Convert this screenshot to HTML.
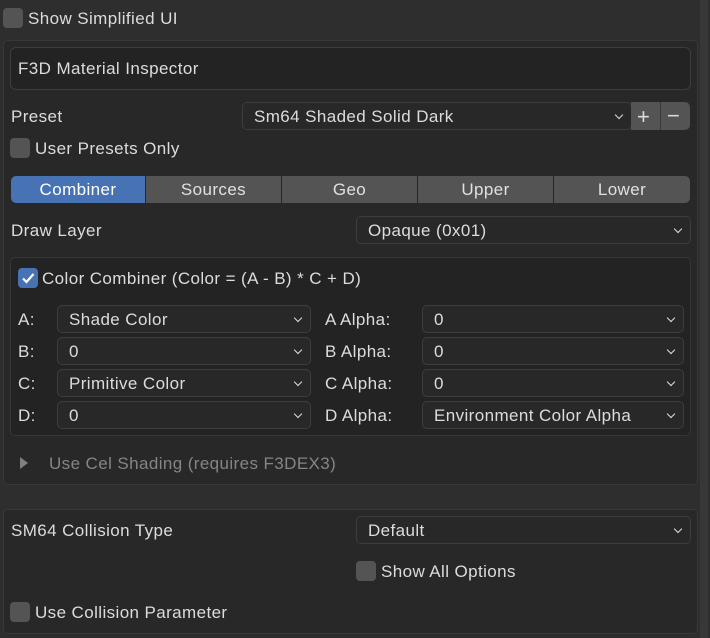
<!DOCTYPE html><html><head><style>
*{box-sizing:border-box}
body{margin:0;width:710px;height:638px;background:#2e2e2e;font-family:"Liberation Sans","DejaVu Sans",sans-serif;font-size:17px;letter-spacing:0.4px;color:#dcdcdc;position:relative;overflow:hidden}
.a{position:absolute}
.cb{position:absolute;width:20px;height:20px;background:#545454;border-radius:4px}
.t{position:absolute;line-height:20px;white-space:nowrap;margin-top:1px}
.dd{position:absolute;background:#282828;border:1px solid #3d3d3d;border-radius:5px;height:28px;line-height:28px;padding-left:11px;white-space:nowrap}
.dd:after{content:"";position:absolute;right:9px;top:9px;width:5px;height:5px;border-right:1.6px solid #ddd;border-bottom:1.6px solid #ddd;transform:rotate(45deg)}
.tab{position:absolute;top:176px;height:27px;background:#545454;text-align:center;line-height:28px;color:#e0e0e0}
</style></head><body>
<div class="a" style="left:700px;top:0;width:8px;height:638px;background:#383838"></div>
<div class="cb" style="left:3px;top:8px"></div><div class="t" style="left:28px;top:8px">Show Simplified UI</div>
<div class="a" style="left:3px;top:40px;width:695px;height:445px;background:#282828;border:1px solid #383838;border-radius:5px"></div>
<div class="a" style="left:10px;top:47px;width:681px;height:43px;background:#232323;border:1px solid #3d3d3d;border-radius:6px"></div>
<div class="t" style="left:18px;top:58px">F3D Material Inspector</div>
<div class="t" style="left:11px;top:106px">Preset</div>
<div class="dd" style="left:242px;top:102px;width:390px">Sm64 Shaded Solid Dark</div>
<div class="a" style="left:631px;top:102px;width:59px;height:28px;background:#545454;border-radius:0 5px 5px 0"></div>
<div class="a" style="left:660px;top:102px;width:1px;height:28px;background:#3a3a3a"></div>
<div class="t" style="left:637px;top:103px;font-size:22px;line-height:26px">+</div>
<div class="t" style="left:667px;top:103px;font-size:22px;line-height:24px">−</div>
<div class="cb" style="left:10px;top:138px"></div><div class="t" style="left:35px;top:138px">User Presets Only</div>
<div class="tab" style="left:11px;width:134px;background:#4772b3;border-radius:5px 0 0 5px;color:#fff">Combiner</div>
<div class="tab" style="left:146px;width:135px">Sources</div>
<div class="tab" style="left:282px;width:135px">Geo</div>
<div class="tab" style="left:418px;width:135px">Upper</div>
<div class="tab" style="left:554px;width:136px;border-radius:0 5px 5px 0">Lower</div>
<div class="t" style="left:11px;top:220px">Draw Layer</div>
<div class="dd" style="left:356px;top:216px;width:335px">Opaque (0x01)</div>
<div class="a" style="left:10px;top:257px;width:681px;height:179px;background:#232323;border:1px solid #363636;border-radius:5px"></div>
<div class="cb" style="left:18px;top:268px;background:#4772b3"></div>
<svg class="a" style="left:18px;top:268px" width="20" height="20"><path d="M5 10.5l3.5 3.5 7-8" stroke="#fff" stroke-width="2.2" fill="none"/></svg>
<div class="t" style="left:42px;top:268px">Color Combiner (Color = (A - B) * C + D)</div>
<div class="t" style="left:18px;top:309px">A:</div><div class="dd" style="left:57px;top:305px;width:254px">Shade Color</div>
<div class="t" style="left:18px;top:341px">B:</div><div class="dd" style="left:57px;top:337px;width:254px">0</div>
<div class="t" style="left:18px;top:373px">C:</div><div class="dd" style="left:57px;top:369px;width:254px">Primitive Color</div>
<div class="t" style="left:18px;top:405px">D:</div><div class="dd" style="left:57px;top:401px;width:254px">0</div>
<div class="t" style="left:325px;top:309px">A Alpha:</div><div class="dd" style="left:422px;top:305px;width:262px">0</div>
<div class="t" style="left:325px;top:341px">B Alpha:</div><div class="dd" style="left:422px;top:337px;width:262px">0</div>
<div class="t" style="left:325px;top:373px">C Alpha:</div><div class="dd" style="left:422px;top:369px;width:262px">0</div>
<div class="t" style="left:325px;top:405px">D Alpha:</div><div class="dd" style="left:422px;top:401px;width:262px">Environment Color Alpha</div>
<svg class="a" style="left:18px;top:456px" width="12" height="14"><path d="M2 1l8 6-8 6z" fill="#808080"/></svg>
<div class="t" style="left:49px;top:453px;color:#858585">Use Cel Shading (requires F3DEX3)</div>
<div class="a" style="left:3px;top:509px;width:695px;height:125px;background:#282828;border:1px solid #383838;border-radius:5px"></div>
<div class="t" style="left:11px;top:520px">SM64 Collision Type</div>
<div class="dd" style="left:356px;top:516px;width:335px">Default</div>
<div class="cb" style="left:356px;top:561px"></div><div class="t" style="left:381px;top:561px">Show All Options</div>
<div class="cb" style="left:10px;top:602px"></div><div class="t" style="left:35px;top:602px">Use Collision Parameter</div>
</body></html>
